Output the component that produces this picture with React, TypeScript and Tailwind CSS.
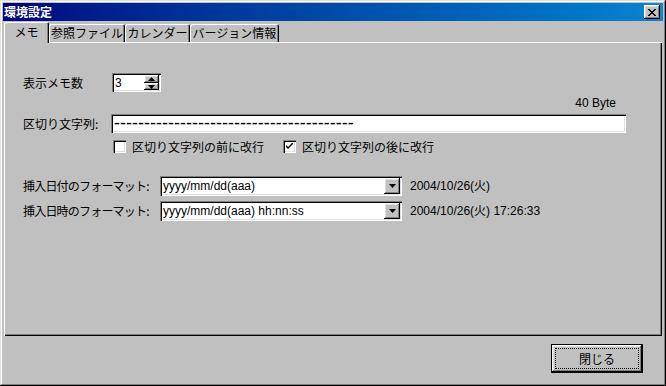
const raised =
  "shadow-[inset_-1px_-1px_#000,inset_1px_1px_#fff,inset_-2px_-2px_#808080,inset_2px_2px_#dfdfdf]";
const sunken =
  "shadow-[inset_1px_1px_#808080,inset_2px_2px_#000,inset_-1px_-1px_#fff,inset_-2px_-2px_#dfdfdf]";

const tabs = [
  { label: "メモ", w: "w-[45px]", active: true },
  { label: "参照ファイル", w: "w-[76px]" },
  { label: "カレンダー", w: "w-[65px]" },
  { label: "バージョン情報", w: "w-[89px]" },
];

const DownArrow = () => (
  <svg width="7" height="4" viewBox="0 0 7 4">
    <path d="M0 0h7L3.5 4z" fill="#000" />
  </svg>
);

const Checkbox = ({ checked, label }: { checked?: boolean; label: string }) => (
  <div className="flex items-center gap-[6px]">
    <div className={`w-[13px] h-[13px] bg-white ${sunken} flex items-center justify-center`}>
      {checked && (
        <svg width="7" height="7" viewBox="0 0 7 7">
          <path d="M0 2v2l2 2 5-5V-1L2 4z" fill="#000" />
        </svg>
      )}
    </div>
    <span className="leading-[14px]">{label}</span>
  </div>
);

const Combo = ({ label, fmt, sample }: { label: string; fmt: string; sample: string }) => (
  <div className="flex items-center h-[20px]">
    <span className="w-[137px] leading-[14px] tracking-[-0.8px]">{label}</span>
    <div className={`w-[242px] h-[20px] bg-white ${sunken} flex items-center p-[2px]`}>
      <span className="flex-1 pl-[1px] leading-[14px] font-['Liberation_Sans',sans-serif] text-[12px]">
        {fmt}
      </span>
      <div className={`w-[16px] h-[16px] bg-[#c0c0c0] ${raised} flex items-center justify-center`}>
        <DownArrow />
      </div>
    </div>
    <span className="ml-[8px] leading-[14px] font-['Liberation_Sans','Noto_Sans_CJK_JP',sans-serif]">
      {sample}
    </span>
  </div>
);

export default function App() {
  return (
    <div
      className={`w-[666px] h-[386px] bg-[#c0c0c0] p-[3px] flex flex-col text-[12px] text-black font-['Noto_Sans_CJK_JP',sans-serif] shadow-[inset_-1px_-1px_#000,inset_1px_1px_#dfdfdf,inset_-2px_-2px_#808080,inset_2px_2px_#fff]`}
    >
      {/* title bar */}
      <div className="h-[18px] flex items-center bg-linear-to-r from-[#000080] to-[#1084d0] pl-[1px] pr-[3px]">
        <span className="flex-1 text-white font-bold leading-[14px] text-[12px]">環境設定</span>
        <div className={`w-[16px] h-[14px] bg-[#c0c0c0] ${raised} flex items-center justify-center`}>
          <svg width="8" height="7" viewBox="0 0 8 7">
            <path
              d="M0 0h2v1h1v1h2V1h1V0h2v1H7v1H6v1H5v1h1v1h1v1h1v1H6V6H5V5H3v1H2v1H0V6h1V5h1V4h1V3H2V2H1V1H0z"
              fill="#000"
            />
          </svg>
        </div>
      </div>

      {/* tabs */}
      <div className="h-[20px] mt-[1px] flex items-end pl-[1px]">
        {tabs.map((t) => (
          <div
            key={t.label}
            className={`${t.w} flex items-center justify-center bg-[#c0c0c0] rounded-t-[2px] leading-[14px] shadow-[inset_1px_1px_#fff,inset_-1px_0_#000,inset_-2px_0_#808080] ${
              t.active ? "h-[21px] -mb-[1px] relative z-10 pb-[2px]" : "h-[18px]"
            }`}
          >
            {t.label}
          </div>
        ))}
      </div>

      {/* panel */}
      <div className="h-[294px] mx-[1px] pl-[19px] pt-[31px] flex flex-col shadow-[inset_1px_1px_#fff,inset_-1px_-1px_#000,inset_-2px_-2px_#808080]">
        <div className="flex items-center h-[19px]">
          <span className="w-[89px] leading-[14px]">表示メモ数</span>
          <div className={`w-[49px] h-[19px] bg-white ${sunken} flex items-center p-[2px]`}>
            <span className="flex-1 pl-[1px] leading-[14px] font-['Liberation_Sans',sans-serif]">3</span>
            <div className="flex flex-col w-[15px] h-[15px]">
              <div className={`h-[8px] bg-[#c0c0c0] ${raised} flex items-center justify-center`}>
                <svg width="7" height="4" viewBox="0 0 7 4">
                  <path d="M3.5 0L7 4H0z" fill="#000" />
                </svg>
              </div>
              <div className={`h-[7px] bg-[#c0c0c0] ${raised} flex items-center justify-center`}>
                <svg width="7" height="4" viewBox="0 0 7 4">
                  <path d="M0 0h7L3.5 4z" fill="#000" />
                </svg>
              </div>
            </div>
          </div>
        </div>

        <div className="w-[593px] mt-[4px] h-[14px] text-right leading-[14px] font-['Liberation_Sans',sans-serif]">
          40 Byte
        </div>

        <div className="flex items-center h-[19px] mt-[4px]">
          <span className="w-[88px] leading-[14px]">区切り文字列:</span>
          <div className={`w-[515px] h-[19px] bg-white ${sunken} flex items-center px-[2px]`}>
            <span className="font-['Liberation_Sans',sans-serif] text-[18px] leading-[15px] pl-[1px]">
              ----------------------------------------
            </span>
          </div>
        </div>

        <div className="flex items-center h-[13px] mt-[7px] ml-[90px]">
          <div className="w-[170px]">
            <Checkbox label="区切り文字列の前に改行" />
          </div>
          <Checkbox checked label="区切り文字列の後に改行" />
        </div>

        <div className="mt-[23px] flex flex-col gap-[5px]">
          <Combo label="挿入日付のフォーマット:" fmt="yyyy/mm/dd(aaa)" sample="2004/10/26(火)" />
          <Combo
            label="挿入日時のフォーマット:"
            fmt="yyyy/mm/dd(aaa) hh:nn:ss"
            sample="2004/10/26(火) 17:26:33"
          />
        </div>
      </div>

      {/* bottom buttons */}
      <div className="flex-1 flex justify-end items-start pt-[8px] pr-[20px]">
        <div className="w-[92px] h-[29px] border border-black">
          <div className={`w-full h-full ${raised} p-[3px]`}>
            <div className="w-full h-full border border-dotted border-black flex items-center justify-center leading-[14px]">
              閉じる
            </div>
          </div>
        </div>
      </div>
    </div>
  );
}
